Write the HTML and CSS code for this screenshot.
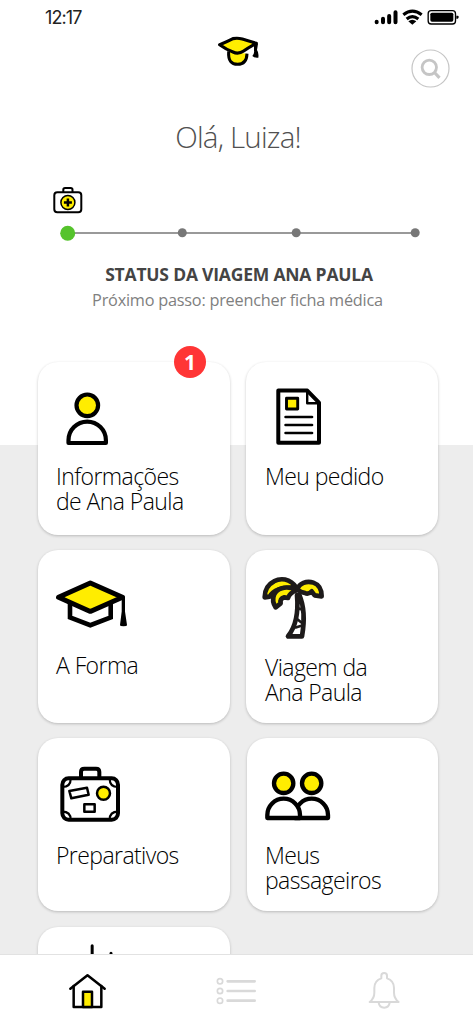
FILE: index.html
```
<!DOCTYPE html>
<html lang="pt-BR">
<head>
<meta charset="utf-8">
<title>Viagem</title>
<link rel="stylesheet" href="styles.css">
</head>
<body>
<div class="phone">
  <header class="statusbar">
    <span class="time">12:17</span>
    <svg class="indicators" viewBox="100 24 264 54" width="88" height="18">
      <g stroke="#000" stroke-width="12" stroke-linecap="round"><path d="M111 65v2M130 56v11M148.500 48v19M167.500 37v30"/></g>
      <g fill="none" stroke="#000" stroke-width="9.500"><path d="M191 44Q218 23 246 44"/><path d="M201 57Q218 43 236 57"/></g>
      <path d="M206 64Q218 54 230 64L218 74z"/>
      <rect x="265.500" y="32" width="82" height="40" rx="9" fill="none" stroke="#000" stroke-width="4"/>
      <rect x="272" y="38" width="69" height="27" rx="5"/>
      <path d="M350 47h4q3 0 3 4t-3 5h-4z"/>
    </svg>
  </header>

  <div class="topbar">
    <svg class="logo" viewBox="36 28 129 99" width="43" height="33">
      <path d="M71 77C69 105 79 116 98 116Q125 116 126 84" fill="#ffed00" stroke="#000" stroke-width="9"/>
      <path d="M44 57Q69 47 84 39Q97 36 112 40Q132 46 154 53Q130 66 116 76Q100 87 84 79Q65 72 44 57z" fill="#ffed00" stroke="#000" stroke-width="9.500" stroke-linejoin="round"/>
      <path d="M147 55L159 54L156 73Q162 81 160 96Q151 98 142 91Q149 83 147 75z"/>
    </svg>
    <button class="search" aria-label="Buscar">
      <svg viewBox="0 0 39 39" width="39" height="39" fill="none" stroke="#c5c5c5">
        <circle cx="19.500" cy="19.500" r="18.500" stroke-width="1.200"/>
        <circle cx="18.300" cy="18.300" r="7.200" stroke-width="2.800"/>
        <path d="M23.500 23.500L28.500 28.800" stroke-width="3.200"/>
      </svg>
    </button>
  </div>

  <h1 class="greeting">Olá, Luiza!</h1>

  <section class="progress">
    <svg class="track" viewBox="0 0 393 60" width="393" height="60">
      <g fill="none" stroke="#000" stroke-width="2">
        <rect x="14.300" y="8.300" width="27" height="20" rx="3"/>
        <path d="M23.300 8V5.800q0-1.800 1.800-1.800h5.600q1.800 0 1.800 1.800V8"/>
        <circle cx="27.900" cy="18.500" r="7" fill="#ffed00" stroke-width="1.500"/>
        <path d="M27.900 14.500v8M23.900 18.500h8" stroke-width="2.500"/>
      </g>
      <path d="M28 49H375" stroke="#777" stroke-width="1.400"/>
      <g fill="#777"><circle cx="142.300" cy="48.800" r="4.500"/><circle cx="256.200" cy="48.800" r="4.500"/><circle cx="375.200" cy="48.800" r="4.500"/></g>
      <circle cx="27.700" cy="49.300" r="7.500" fill="#55c32c"/>
    </svg>
    <h2 class="trip">STATUS DA VIAGEM ANA PAULA</h2>
    <p class="next">Próximo passo: preencher ficha médica</p>
  </section>

  <main class="content">
    <div class="grid">
      <a class="card">
        <span class="badge">1</span>
        <svg class="art" viewBox="0 0 192 100">
          <g stroke="#000" stroke-width="4.200" stroke-linejoin="round">
            <circle cx="49.300" cy="43.300" r="10.800" fill="#ffed00"/>
            <path d="M30.500 81V78.300a18.700 18.700 0 0 1 37.400 0V81z" fill="#fff"/>
          </g>
        </svg>
        <span class="label">Informações<br>de Ana Paula</span>
      </a>
      <a class="card">
        <svg class="art" viewBox="0 0 192 100">
          <g fill="none" stroke="#000" stroke-linejoin="round">
            <path d="M32.300 28.600H61.300L73 40.600V80.700H32.300z" stroke-width="4"/>
            <path d="M61.200 29.500V41.300H72" stroke-width="2.400"/>
            <rect x="40.500" y="36.200" width="11.200" height="10.800" fill="#ffed00" stroke-width="2.900"/>
            <path d="M39.600 55H66M39.600 63H66M39.600 71H66" stroke-width="2.700" stroke-linecap="round"/>
          </g>
        </svg>
        <span class="label wide">Meu pedido</span>
      </a>
      <a class="card">
        <svg class="art" viewBox="0 0 192 100">
          <g fill="none" stroke="#000" stroke-width="4.600">
            <path d="M32 51V67.400L52.300 75.200L72.700 67.400V51"/>
            <path d="M20.500 47.200L52.300 33L84.500 47.200L52.300 61.400z" fill="#ffed00" stroke-width="4.900" stroke-linejoin="round"/>
          </g>
          <path d="M83.700 47H87V61.500L89 75Q89 76.200 85.500 76.200T82 75L83.700 61.500z"/>
        </svg>
        <span class="label drop-1">A Forma</span>
      </a>
      <a class="card">
        <svg class="art" viewBox="33 15 576 300">
          <g fill="#ffed00" stroke="#1d1a1a" stroke-width="14" stroke-linejoin="round">
            <path d="M186 150C190 195 184 243 159 274H201C208 235 210 190 193 150z" fill="#fff"/>
            <path d="M187 190L206 194M186 222L206 238M180 248L206 240" stroke-width="8"/>
            <path d="M185 129C165 98 135 99 117 109C97 119 89 138 89 157L104 155C113 137 140 124 185 129z"/>
            <path d="M183 133C150 121 125 130 117 150C112 163 116 178 122 187L137 175Q134 161 148 157L159 159Q164 144 183 137z"/>
            <path d="M187 134C192 115 215 106 235 113C252 119 260 135 260 154L239 151L230 139Q220 149 210 144L199 141z"/>
          </g>
        </svg>
        <span class="label wide drop-3">Viagem da<br>Ana Paula</span>
      </a>
      <a class="card">
        <svg class="art" viewBox="24 24 576 300">
          <g fill="none" stroke="#000" stroke-width="12">
            <path d="M153 142V126q0-10 10-10h35q10 0 10 10V142"/>
            <rect x="97" y="145" width="167" height="124" rx="19"/>
            <path d="M122 147Q122 171 97 171M239 147Q239 171 264 171M97 245Q122 245 122 269M264 245Q239 245 239 269" stroke-width="6.500"/>
            <g stroke-width="7.500" stroke-linejoin="round">
              <path d="M118 183L171 173L176 194L124 205z"/>
              <circle cx="220.500" cy="190" r="19.500" fill="#ffed00"/>
              <rect x="163" y="223" width="31" height="22"/>
            </g>
          </g>
        </svg>
        <span class="label drop-3">Preparativos</span>
      </a>
      <a class="card nudge">
        <svg class="art" viewBox="36 24 576 300">
          <g fill="#fff" stroke="#000" stroke-width="13" stroke-linejoin="round">
            <circle cx="146" cy="160" r="29" fill="#ffed00"/>
            <circle cx="230" cy="160" r="29" fill="#ffed00"/>
            <path d="M180 264H279V255a49 49 0 0 0-98 0z"/>
            <path d="M97 264V255a49 49 0 0 1 98 0V264z"/>
          </g>
        </svg>
        <span class="label drop-3">Meus<br>passageiros</span>
      </a>
      <a class="card last">
        <svg class="art" viewBox="114 51 576 300">
          <path d="M276.500 107V200M333 130V200" stroke="#000" stroke-width="9" stroke-linecap="round"/>
        </svg>
      </a>
    </div>
  </main>

  <nav class="tabs">
    <svg viewBox="204 186 117 114" width="39" height="38">
      <g fill="none" stroke="#000" stroke-width="7.500" stroke-linejoin="round" stroke-linecap="round">
        <path d="M221 228V291H304V228"/>
        <path d="M211 236L262.500 196L314 236"/>
        <rect x="249" y="245" width="27" height="46" fill="#ffed00"/>
      </g>
    </svg>
    <svg class="list" viewBox="648 186 123 114" width="41" height="38">
      <g fill="none" stroke="#d9d9d9" stroke-linecap="round">
        <g stroke-width="5"><circle cx="660" cy="214" r="8"/><circle cx="660" cy="243" r="8"/><circle cx="660" cy="272" r="8"/></g>
        <path d="M683 214H764M683 243H764M683 272H764" stroke-width="8"/>
      </g>
    </svg>
    <svg viewBox="1104 186 99 114" width="33" height="38">
      <g fill="none" stroke="#d9d9d9" stroke-width="6" stroke-linejoin="round">
        <path d="M1109 276Q1123 265 1123 248V234C1123 218 1131 209 1144 205V197Q1144 189 1152.500 189T1161 197V205C1174 209 1182 218 1182 234V248Q1182 265 1196 276z"/>
        <path d="M1136 278Q1138 293 1152.500 293T1169 278"/>
      </g>
    </svg>
  </nav>
</div>
</body>
</html>
```
FILE: styles.css
```
* { box-sizing: border-box; }
body { margin: 0; background: #fff; font-family: "Open Sans", "Noto Sans", sans-serif; }
h1, h2, p { margin: 0; }
svg { display: block; }
.phone { width: 473px; height: 1024px; display: flex; flex-direction: column; overflow: hidden;
  background: linear-gradient(#fff 445px, #ededed 445px); }
.statusbar { height: 35px; display: flex; justify-content: space-between; padding: 8px 12px 0 45px; flex: none; }
.time { margin-top: 1px; font: 400 18px/18px Inter, sans-serif; letter-spacing: -.9px; color: #222; }
.topbar { height: 56px; display: grid; grid-template-columns: 1fr 43px 1fr; padding: 0 23px 0 0; margin-left: 25px; flex: none; }
.logo { grid-column: 2; margin: 0 0 0 1px; }
.search { justify-self: end; border: 0; padding: 0; background: none; width: 39px; height: 39px; margin-top: 14px; }
.greeting { height: 95px; padding-top: 25px; text-align: center; font-weight: 300; font-size: 29.500px; line-height: 41px; color: #505050; letter-spacing: -.8px; padding-left: 3px; flex: none; }
.progress { height: 176px; text-align: center; flex: none; }
.track { margin: -2px 0 0 40px; }
.trip { margin-top: 18px; font-weight: 700; font-size: 17.500px; line-height: 24px; letter-spacing: -.2px; color: #444; padding-left: 5px; }
.next { margin-top: 2px; font-size: 16.300px; line-height: 24px; letter-spacing: -.23px; color: #808080; padding-left: 2px; }
.content { flex: 1; min-height: 0; padding: 20px 34px 0 38px; margin-top: -20px; overflow: clip; }
.grid { display: grid; grid-template-columns: 192px 192px; gap: 15px 16px; }
.card { position: relative; height: 173px; border-radius: 20px; background: #fff; box-shadow: 0 1px 3px rgba(0,0,0,.22); }
.card.nudge { margin-left: 1px; }
.card.last { margin-top: 1px; }
.art { width: 192px; height: 100px; }
.label { display: block; padding: 2px 0 0 18px; font-weight: 300; font-size: 23px; line-height: 25.300px; letter-spacing: -.58px; color: #000; white-space: nowrap; }
.wide { padding-left: 19px; }
.drop-1 { padding-top: 3px; }
.drop-3 { padding-top: 5px; }
.badge { position: absolute; left: 136px; top: -16px; width: 32px; height: 32px; border-radius: 50%; background: #ff3535; color: #fff; font-weight: 700; font-size: 21px; line-height: 32px; text-align: center; }
.tabs { height: 70px; flex: none; display: flex; justify-content: space-between; align-items: flex-start; padding: 17px 72px 0 68px; background: #fff; border-top: 1px solid #e2e2e2; }
.list { margin-left: -2px; }
```
